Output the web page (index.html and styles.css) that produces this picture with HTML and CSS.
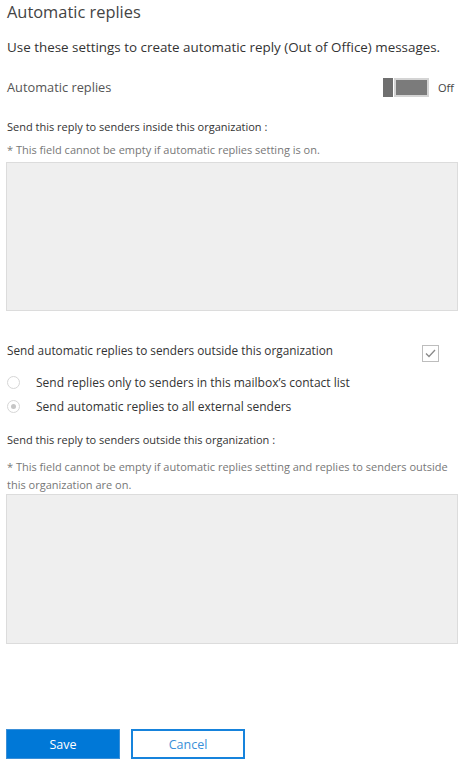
FILE: index.html
```html
<!DOCTYPE html>
<html>
<head>
<meta charset="utf-8">
<link rel="stylesheet" href="styles.css">
</head>
<body>
<div class="page">
  <h1 class="title">Automatic replies</h1>
  <p class="intro">Use these settings to create automatic reply (Out of Office) messages.</p>
  <div class="row toggle-row">
    <span class="row-label">Automatic replies</span>
    <span class="toggle-wrap">
      <span class="toggle"><span class="knob"></span><span class="track"></span></span>
      <span class="toggle-text">Off</span>
    </span>
  </div>
  <div class="label">Send this reply to senders inside this organization :</div>
  <div class="hint">* This field cannot be empty if automatic replies setting is on.</div>
  <div class="box box1"></div>
  <div class="row check-row">
    <span class="check-label">Send automatic replies to senders outside this organization</span>
    <span class="checkbox">
      <svg width="11" height="9" viewBox="0 0 11 9"><path d="M1 4.5 L4 7.5 L10 1" fill="none" stroke="#8a8a8a" stroke-width="1.3"/></svg>
    </span>
  </div>
  <div class="radio-row r1"><span class="radio"></span><span class="radio-text">Send replies only to senders in this mailbox’s contact list</span></div>
  <div class="radio-row r2"><span class="radio checked"></span><span class="radio-text">Send automatic replies to all external senders</span></div>
  <div class="label label2">Send this reply to senders outside this organization :</div>
  <div class="hint hint2">* This field cannot be empty if automatic replies setting and replies to senders outside this organization are on.</div>
  <div class="box box2"></div>
  <div class="buttons">
    <button class="btn save">Save</button>
    <button class="btn cancel">Cancel</button>
  </div>
</div>
</body>
</html>
```
FILE: styles.css
```css
html, body { margin: 0; padding: 0; background: #fff; }
body { font-family: "Open Sans", "Noto Sans", sans-serif; color: #333; }
.page { padding: 0 18px 0 6px; width: 452px; }
.title { font-weight: 400; font-size: 16.4px; color: #444; margin: 0; padding: 1px 0 0 1px; line-height: 22px; }
.intro { font-size: 13.4px; margin: 15px 0 0 1px; line-height: 18px; color: #333; white-space: nowrap; }
.row { display: flex; align-items: center; justify-content: space-between; }
.toggle-row { margin-top: 20px; height: 22px; }
.row-label { font-size: 12.8px; color: #555; padding-left: 1px; }
.toggle-wrap { display: flex; align-items: center; }
.toggle { display: flex; gap: 1px; height: 19px; }
.knob { width: 10px; height: 19px; background: #6f6f6f; }
.track { width: 31px; height: 15px; background: #7b7b7b; border: 2px solid #d4d4d4; }
.toggle-text { font-size: 11px; color: #444; margin-left: 9px; width: 20px; }
.label { font-size: 11px; margin-top: 21px; line-height: 16px; color: #333; padding-left: 1px; }
.hint { font-size: 11px; color: #777; margin-top: 6px; line-height: 18px; padding-left: 1px; }
.box { background: #efefef; border: 1px solid #dcdcdc; }
.box1 { height: 147px; margin-top: 3px; }
.check-row { margin-top: 29px; height: 20px; }
.check-label { font-size: 11.8px; color: #333; padding-left: 1px; }
.checkbox { width: 15px; height: 15px; border: 1px solid #bdbdbd; display: flex; align-items: center; justify-content: center; margin-right: 19px; margin-top: 7px; }
.radio-row { display: flex; align-items: center; height: 20px; }
.r1 { margin-top: 12px; }
.r2 { margin-top: 4px; }
.radio { width: 11px; height: 11px; border: 1px solid #d6d6d6; border-radius: 50%; margin-left: 1px; position: relative; flex: none; }
.radio.checked::after { content: ""; position: absolute; left: 3px; top: 3px; width: 5px; height: 5px; border-radius: 50%; background: #c6c6c6; }
.radio-text { font-size: 12px; margin-left: 16px; color: #333; }
.label2 { margin-top: 16px; }
.hint2 { margin-top: 10px; }
.box2 { height: 148px; margin-top: 0; }
.buttons { display: flex; gap: 11px; margin-top: 85px; }
.btn { width: 114px; height: 30px; font-family: inherit; font-size: 12.5px; box-sizing: border-box; padding: 0; }
.save { background: #0078d7; color: #fff; border: 1px solid #3a8fd8; }
.cancel { background: #fff; color: #3a8fd8; border: 2px solid #1683dc; }
```
